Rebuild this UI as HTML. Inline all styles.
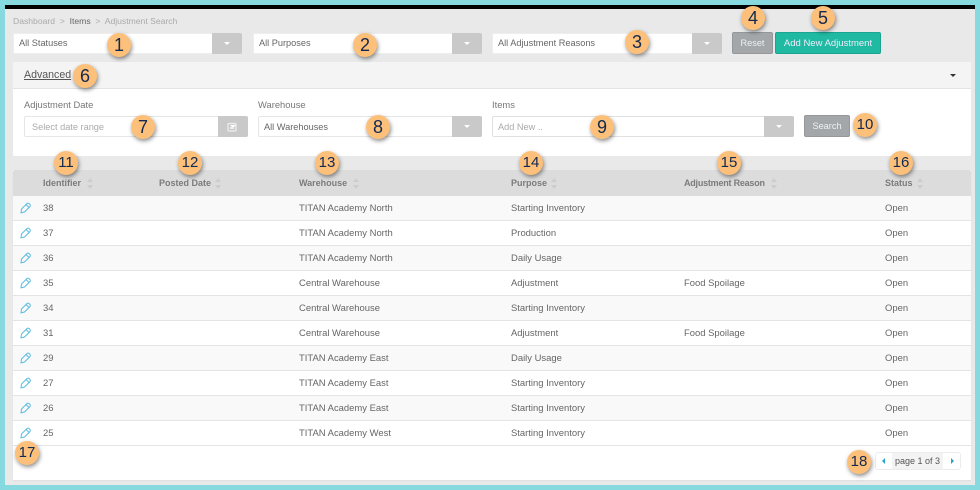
<!DOCTYPE html>
<html><head><meta charset="utf-8"><style>
html,body{margin:0;padding:0}
body{width:980px;height:490px;position:relative;overflow:hidden;background:#85d9df;font-family:"Liberation Sans",sans-serif;font-size:9.2px;color:#666}
.a{position:absolute;white-space:nowrap}
.sel{position:absolute;height:21px;background:#fff;border-radius:2px;box-sizing:border-box;border:1px solid #eee}
.sel span{position:absolute;left:5px;top:0;line-height:19px;color:#666}
.sel.t span{top:1px}
.sel i{position:absolute;right:-1px;top:-1px;width:30px;height:21px;background:#c9c9c9;border-radius:0 2px 2px 0}
.sel i:after{content:"";position:absolute;left:12px;top:9px;border:3px solid transparent;border-top:3px solid #fff;border-bottom:0}
.btn{position:absolute;box-sizing:border-box;height:22px;line-height:20px;text-align:center;color:#f0f0f0;border-radius:2px;background:#a3a7aa;border:1px solid #94989b}
.b{position:absolute;width:24px;height:24px;border-radius:50%;background:#fdc07a;box-shadow:1px 2px 4px rgba(0,0,0,.45);text-align:center;line-height:24px;font-size:18px;color:#13294f;z-index:5}
.b.s{font-size:15px}
.row{position:absolute;left:13px;width:958px;height:25px;box-sizing:border-box;border-bottom:1px solid #e4e4e4;background:#fff;font-size:9.45px}
.row.o{background:#f9f9f9}
.row span{position:absolute;top:1px;line-height:24px;white-space:nowrap}
.row svg{position:absolute;left:7px;top:6px}
.h{position:absolute;top:170px;line-height:26px;font-weight:bold;color:#7b7b7b;white-space:nowrap;font-size:9px;z-index:2}
.srt{position:absolute;top:178px;width:7px;height:11px;z-index:2}
.srt:before{content:"";position:absolute;left:0;top:0;border:3.5px solid transparent;border-bottom:4.5px solid #cdcdcd;border-top:0}
.srt:after{content:"";position:absolute;left:0;top:6.5px;border:3.5px solid transparent;border-top:4.5px solid #cdcdcd;border-bottom:0}
</style></head><body>
<div class="a" style="left:5px;top:5px;width:970px;height:480px;background:#e9e9e9"></div>
<div class="a" style="left:5px;top:5px;width:970px;height:4px;background:#000"></div>

<div class="a" style="left:13px;top:16px;line-height:10px;font-size:8.6px;color:#aaa">Dashboard &nbsp;&gt;&nbsp; <span style="color:#666">Items</span> &nbsp;&gt;&nbsp; Adjustment Search</div>

<div class="sel" style="left:13px;top:33px;width:229px"><span>All Statuses</span><i></i></div>
<div class="sel" style="left:253px;top:33px;width:229px"><span>All Purposes</span><i></i></div>
<div class="sel" style="left:492px;top:33px;width:230px"><span>All Adjustment Reasons</span><i></i></div>
<div class="btn" style="left:732px;top:32px;width:41px">Reset</div>
<div class="btn" style="left:775px;top:32px;width:106px;background:#20b9a1;border-color:#1ba590;color:#eef;font-size:9.5px;line-height:21px">Add New Adjustment</div>

<!-- Advanced panel -->
<div class="a" style="left:13px;top:62px;width:958px;height:94px;background:#fff;border-radius:2px"></div>
<div class="a" style="left:13px;top:62px;width:958px;height:26px;background:#f4f4f4;border-bottom:1px solid #e4e4e4;border-radius:2px 2px 0 0"></div>
<div class="a" style="left:24px;top:68px;font-size:10.6px;line-height:14px;color:#555;text-decoration:underline">Advanced</div>
<div class="a" style="left:950px;top:74px;border:3px solid transparent;border-top:3px solid #333;border-bottom:0"></div>
<div class="a" style="left:24px;top:100px;line-height:10px;color:#777;font-size:9.4px">Adjustment Date</div>
<div class="a" style="left:258px;top:100px;line-height:10px;color:#777;font-size:9.4px">Warehouse</div>
<div class="a" style="left:492px;top:100px;line-height:10px;color:#777;font-size:9.4px">Items</div>
<div class="sel t" style="left:24px;top:116px;width:224px;border-color:#e6e6e6"><span style="left:7px;color:#aaa">Select date range</span><i></i></div>
<svg class="a" style="left:227px;top:122px;z-index:3" width="10" height="10"><rect x="1" y="1.5" width="8" height="7.5" rx="1" fill="none" stroke="#eee" stroke-width="1.2"/><rect x="3" y="5" width="4" height="2" fill="#eee"/></svg>
<div class="sel t" style="left:258px;top:116px;width:224px;border-color:#e6e6e6"><span>All Warehouses</span><i></i></div>
<div class="sel t" style="left:492px;top:116px;width:302px;border-color:#e0e0e0"><span style="color:#aaa">Add New ..</span><i></i></div>
<div class="btn" style="left:804px;top:115px;width:46px">Search</div>

<!-- table -->
<div class="a" style="left:13px;top:170px;width:958px;height:310px;background:#fff;box-shadow:0 1px 1px #ddd"></div>
<div class="a" style="left:13px;top:170px;width:958px;height:26px;background:#dcdcdc;border-radius:2px 2px 0 0"></div>
<div class="h" style="left:43px">Identifier</div><div class="srt" style="left:87px"></div>
<div class="h" style="left:159px">Posted Date</div><div class="srt" style="left:215px"></div>
<div class="h" style="left:299px">Warehouse</div><div class="srt" style="left:353px"></div>
<div class="h" style="left:511px">Purpose</div><div class="srt" style="left:551px"></div>
<div class="h" style="left:684px;letter-spacing:-.22px">Adjustment Reason</div><div class="srt" style="left:771px"></div>
<div class="h" style="left:885px">Status</div><div class="srt" style="left:917px"></div>

<div class="row o" style="top:196px"><svg width="12" height="12" viewBox="0 0 12 12"><path d="M1.5 7L7 1.5Q8 .7 9 1.5L10 2.5Q10.7 3.5 10 4.5L4.5 10 1 10.8ZM6 2.5l3 3" fill="none" stroke="#5bbbe0" stroke-width="1"/></svg><span style="left:30px">38</span><span style="left:286px">TITAN Academy North</span><span style="left:498px">Starting Inventory</span><span style="left:872px">Open</span></div>
<div class="row" style="top:221px"><svg width="12" height="12" viewBox="0 0 12 12"><path d="M1.5 7L7 1.5Q8 .7 9 1.5L10 2.5Q10.7 3.5 10 4.5L4.5 10 1 10.8ZM6 2.5l3 3" fill="none" stroke="#5bbbe0" stroke-width="1"/></svg><span style="left:30px">37</span><span style="left:286px">TITAN Academy North</span><span style="left:498px">Production</span><span style="left:872px">Open</span></div>
<div class="row o" style="top:246px"><svg width="12" height="12" viewBox="0 0 12 12"><path d="M1.5 7L7 1.5Q8 .7 9 1.5L10 2.5Q10.7 3.5 10 4.5L4.5 10 1 10.8ZM6 2.5l3 3" fill="none" stroke="#5bbbe0" stroke-width="1"/></svg><span style="left:30px">36</span><span style="left:286px">TITAN Academy North</span><span style="left:498px">Daily Usage</span><span style="left:872px">Open</span></div>
<div class="row" style="top:271px"><svg width="12" height="12" viewBox="0 0 12 12"><path d="M1.5 7L7 1.5Q8 .7 9 1.5L10 2.5Q10.7 3.5 10 4.5L4.5 10 1 10.8ZM6 2.5l3 3" fill="none" stroke="#5bbbe0" stroke-width="1"/></svg><span style="left:30px">35</span><span style="left:286px">Central Warehouse</span><span style="left:498px">Adjustment</span><span style="left:671px">Food Spoilage</span><span style="left:872px">Open</span></div>
<div class="row o" style="top:296px"><svg width="12" height="12" viewBox="0 0 12 12"><path d="M1.5 7L7 1.5Q8 .7 9 1.5L10 2.5Q10.7 3.5 10 4.5L4.5 10 1 10.8ZM6 2.5l3 3" fill="none" stroke="#5bbbe0" stroke-width="1"/></svg><span style="left:30px">34</span><span style="left:286px">Central Warehouse</span><span style="left:498px">Starting Inventory</span><span style="left:872px">Open</span></div>
<div class="row" style="top:321px"><svg width="12" height="12" viewBox="0 0 12 12"><path d="M1.5 7L7 1.5Q8 .7 9 1.5L10 2.5Q10.7 3.5 10 4.5L4.5 10 1 10.8ZM6 2.5l3 3" fill="none" stroke="#5bbbe0" stroke-width="1"/></svg><span style="left:30px">31</span><span style="left:286px">Central Warehouse</span><span style="left:498px">Adjustment</span><span style="left:671px">Food Spoilage</span><span style="left:872px">Open</span></div>
<div class="row o" style="top:346px"><svg width="12" height="12" viewBox="0 0 12 12"><path d="M1.5 7L7 1.5Q8 .7 9 1.5L10 2.5Q10.7 3.5 10 4.5L4.5 10 1 10.8ZM6 2.5l3 3" fill="none" stroke="#5bbbe0" stroke-width="1"/></svg><span style="left:30px">29</span><span style="left:286px">TITAN Academy East</span><span style="left:498px">Daily Usage</span><span style="left:872px">Open</span></div>
<div class="row" style="top:371px"><svg width="12" height="12" viewBox="0 0 12 12"><path d="M1.5 7L7 1.5Q8 .7 9 1.5L10 2.5Q10.7 3.5 10 4.5L4.5 10 1 10.8ZM6 2.5l3 3" fill="none" stroke="#5bbbe0" stroke-width="1"/></svg><span style="left:30px">27</span><span style="left:286px">TITAN Academy East</span><span style="left:498px">Starting Inventory</span><span style="left:872px">Open</span></div>
<div class="row o" style="top:396px"><svg width="12" height="12" viewBox="0 0 12 12"><path d="M1.5 7L7 1.5Q8 .7 9 1.5L10 2.5Q10.7 3.5 10 4.5L4.5 10 1 10.8ZM6 2.5l3 3" fill="none" stroke="#5bbbe0" stroke-width="1"/></svg><span style="left:30px">26</span><span style="left:286px">TITAN Academy East</span><span style="left:498px">Starting Inventory</span><span style="left:872px">Open</span></div>
<div class="row" style="top:421px"><svg width="12" height="12" viewBox="0 0 12 12"><path d="M1.5 7L7 1.5Q8 .7 9 1.5L10 2.5Q10.7 3.5 10 4.5L4.5 10 1 10.8ZM6 2.5l3 3" fill="none" stroke="#5bbbe0" stroke-width="1"/></svg><span style="left:30px">25</span><span style="left:286px">TITAN Academy West</span><span style="left:498px">Starting Inventory</span><span style="left:872px">Open</span></div>

<!-- pager -->
<div class="a" style="left:875px;top:452px;width:86px;height:18px;box-sizing:border-box;border:1px solid #ececec;border-radius:3px;background:#fff"></div>
<div class="a" style="left:892px;top:453px;width:51px;height:16px;background:#f3f3f3;text-align:center;line-height:16px;color:#555;font-size:9px">page 1 of 3</div>
<div class="a" style="left:882px;top:458px;border:3px solid transparent;border-right:3px solid #2aa3cf;border-left:0"></div>
<div class="a" style="left:951px;top:458px;border:3px solid transparent;border-left:3px solid #2aa3cf;border-right:0"></div>

<!-- badges -->
<div class="b" style="left:107px;top:33px">1</div>
<div class="b" style="left:353px;top:33px">2</div>
<div class="b" style="left:625px;top:30px">3</div>
<div class="b" style="left:741px;top:6px">4</div>
<div class="b" style="left:811px;top:6px">5</div>
<div class="b" style="left:73px;top:64px">6</div>
<div class="b" style="left:131px;top:115px">7</div>
<div class="b" style="left:366px;top:115px">8</div>
<div class="b" style="left:590px;top:115px">9</div>
<div class="b s" style="left:853px;top:113px">10</div>
<div class="b s" style="left:54px;top:151px">11</div>
<div class="b s" style="left:178px;top:151px">12</div>
<div class="b s" style="left:315px;top:151px">13</div>
<div class="b s" style="left:519px;top:151px">14</div>
<div class="b s" style="left:717px;top:151px">15</div>
<div class="b s" style="left:889px;top:151px">16</div>
<div class="b s" style="left:15px;top:441px">17</div>
<div class="b s" style="left:847px;top:450px">18</div>
</body></html>
